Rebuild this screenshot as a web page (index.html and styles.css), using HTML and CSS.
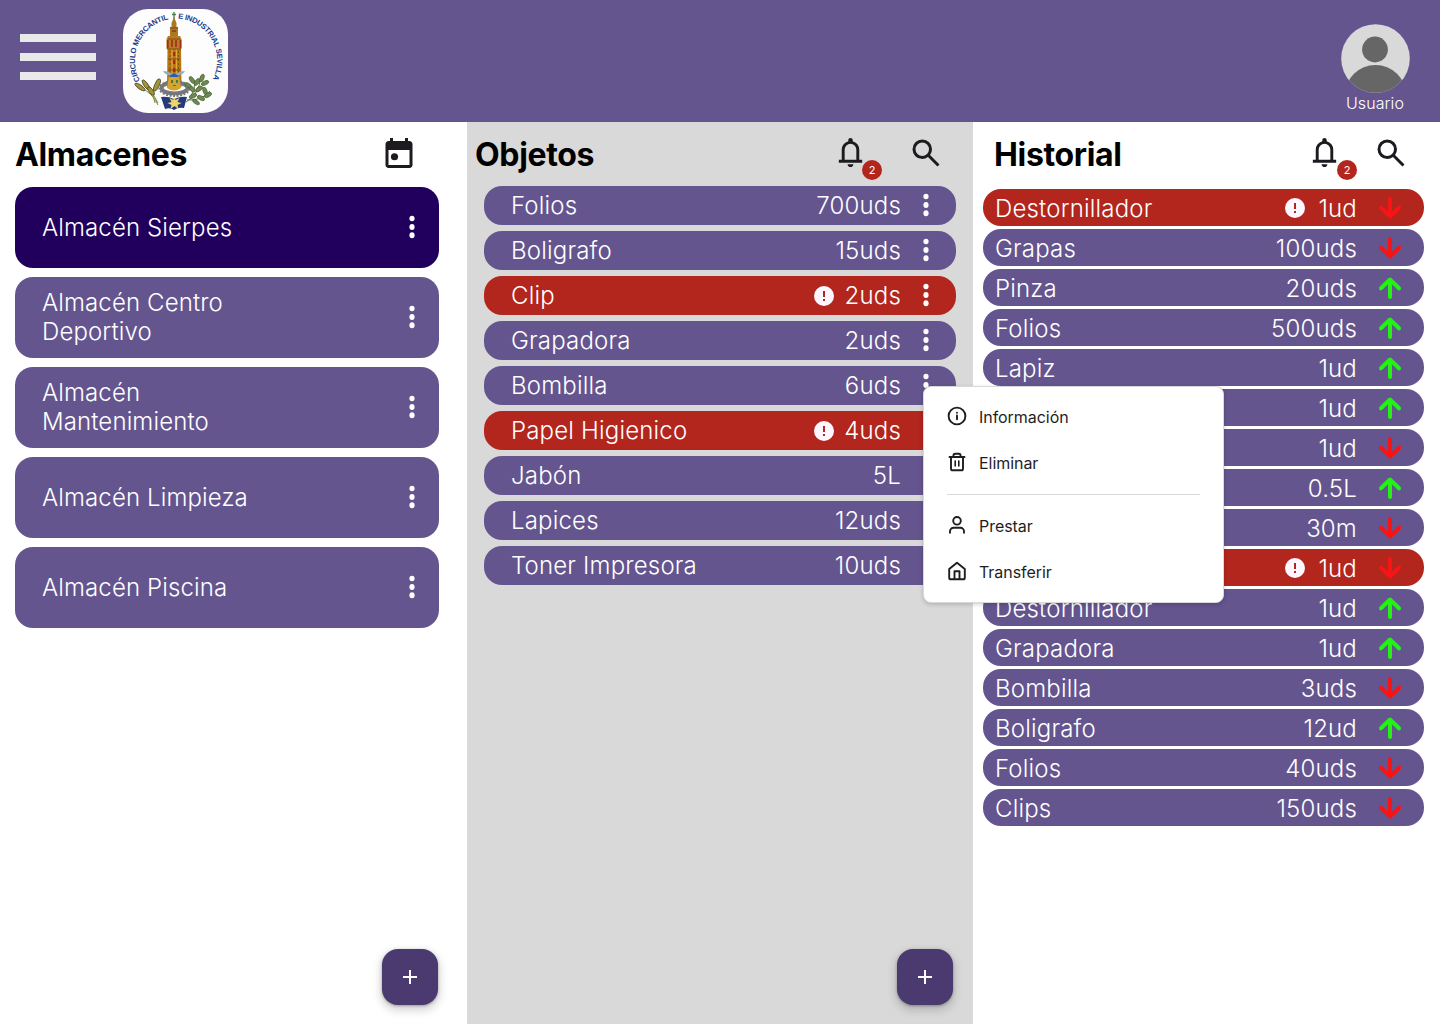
FILE: index.html
```html
<!DOCTYPE html>
<html lang="es">
<head>
<meta charset="utf-8">
<title>Almacenes</title>
<link rel="stylesheet" href="styles.css">
</head>
<body>
<svg class="defs" aria-hidden="true">
  <symbol id="bell" viewBox="0 -960 960 960"><path d="M160-200v-80h80v-280q0-83 50-147.500T420-792v-28q0-25 17.500-42.500T480-880q25 0 42.500 17.500T540-820v28q80 20 130 84.500T720-560v280h80v80H160Zm320 120q-33 0-56.500-23.500T400-160h160q0 33-23.500 56.500T480-80ZM320-280h320v-280q0-66-47-113t-113-47q-66 0-113 47t-47 113v280Z"/></symbol>
  <symbol id="search" viewBox="0 0 24 24"><path d="M19.600 21l-6.300-6.300A6.100 6.100 0 0 1 9.500 16 6.500 6.500 0 1 1 16 9.500a6.100 6.100 0 0 1-1.300 3.800l6.300 6.300zM9.500 14a4.500 4.500 0 1 0 0-9 4.500 4.500 0 0 0 0 9z"/></symbol>
  <symbol id="today" viewBox="0 0 24 24"><path fill-rule="evenodd" d="M5 22q-.82 0-1.410-.590T3 20V6q0-.820.590-1.410T5 4h1V2h2v2h8V2h2v2h1q.820 0 1.410.590T21 6v14q0 .820-.590 1.410T19 22zM5 20h14V10H5z"/><circle cx="9" cy="14.500" r="2.400"/></symbol>
  <symbol id="dots" viewBox="0 0 6 24"><ellipse cx="3" cy="3.500" rx="2.600" ry="2.800"/><ellipse cx="3" cy="12" rx="2.600" ry="3"/><ellipse cx="3" cy="20.300" rx="2.600" ry="3"/></symbol>
  <symbol id="alert" viewBox="0 0 20 20"><circle cx="10" cy="10" r="10" fill="#fef7ff"/><path d="M9 5h2v6H9zM9 13h2v2H9z" fill="#b3261e"/></symbol>
  <symbol id="down" viewBox="0 0 22 22"><path d="M11 2v17M2 10.700l9 8.800 9-8.800" fill="none" stroke="#f71414" stroke-width="4" stroke-linecap="round" stroke-linejoin="round"/></symbol>
  <symbol id="up" viewBox="0 0 22 22"><path d="M11 20V3M2 11.300l9-8.800 9 8.800" fill="none" stroke="#22f314" stroke-width="4" stroke-linecap="round" stroke-linejoin="round"/></symbol>
</svg>

<header class="topbar">
  <button class="menu-button" aria-label="Menú"><span></span><span></span><span></span></button>
  <svg class="logo" viewBox="0 0 105 104">
    <rect width="105" height="104" rx="25" fill="#fdfdfd"/>
    <path id="arcLeft" d="M17 71.500A42 42 0 0 1 46.500 10.200" fill="none"/>
    <path id="arcRight" d="M55 9.500A42 42 0 0 1 89 71.500" fill="none"/>
    <g font-family="Liberation Sans, sans-serif" font-weight="700" font-size="7.600" fill="#17398c">
      <text><textPath href="#arcLeft" textLength="78">CIRCULO MERCANTIL</textPath></text>
      <text><textPath href="#arcRight" textLength="82">E INDUSTRIAL SEVILLA</textPath></text>
    </g>
    <path d="M51 3v7M49 5.500h4" stroke="#3c8448" stroke-width="1.300"/>
    <path d="M51 8l2.500 6v4h1.500v10H47V18h1.500v-4z" fill="#a97a22"/>
    <path d="M45 27h12l1.500 3v10h-15V30z" fill="#b87d20"/>
    <path d="M44.500 40h13.500l.5 38h-14.500z" fill="#b97511"/>
    <path d="M49 40v31M53.300 40v31" stroke="#e8b83c" stroke-width="1"/>
    <path d="M44.800 31v8M57.500 31v8M49 31v7M53 31v7M49 22h4" stroke="#9f2f22" stroke-width="1.700"/>
    <path d="M44 40h14M45 30h12M47 19h8M45 50h12M45 61h12" stroke="#674318" stroke-width=".8"/>
    <path d="M51.200 43v22" stroke="#a12a19" stroke-width="2.200" stroke-dasharray="4 4"/>
    <path d="M47 42v24M55.500 42v24" stroke="#7e4f10" stroke-width="1" stroke-dasharray="2 2"/>
    <ellipse cx="51.500" cy="79" rx="13" ry="5.500" fill="none" stroke="#77777b" stroke-width="4"/>
    <ellipse cx="51.500" cy="79.500" rx="15" ry="7.500" fill="none" stroke="#77777c" stroke-width="2" stroke-dasharray="2 1.500"/>
    <path d="M46 67h10l2 12q-7 5-14 0z" fill="#d6a32c"/>
    <path d="M40 62q6 0 9 3h4q3-3 9-3-2 4-7 4h-8q-5 0-7-4z" fill="#9babb4"/>
    <path d="M46 68q5-7 10 0z" fill="#285eb0"/>
    <path d="M48 71h2v3h-2zM53 71h2v3h-2zM50 76h3v1h-3z" fill="#477b45"/>
    <path d="M38 88q7-1 13 2 7-3 13-2l-3 11q-6-1-10 2-4-3-9-1z" fill="#253a7d"/>
    <path d="M51 87l1.500 4 4-2-2 4 4 1-4 2 1 4-4-3-4 3 1-4-4-2 4-1-2-4 4 2z" fill="#efd56a"/>
    <path d="M14 76q17 9 21 20M20 72q10 11 15 22M35 72q-8 9-3 22" fill="none" stroke="#7e8642" stroke-width="1"/>
    <g fill="#a39538" stroke="#53522a" stroke-width=".9">
      <ellipse cx="17" cy="78" rx="2" ry="6" transform="rotate(-55 17 78)"/>
      <ellipse cx="23" cy="76" rx="2" ry="6" transform="rotate(-35 23 76)"/>
      <ellipse cx="34" cy="76" rx="2.200" ry="6.500" transform="rotate(25 34 76)"/>
      <ellipse cx="28" cy="82" rx="2" ry="5" transform="rotate(-35 28 82)"/>
    </g>
    <path d="M63 93q13-7 15-26M64 91q15 1 23-9M67 88q6-8 4-17" fill="none" stroke="#59723d" stroke-width="1"/>
    <g fill="#6f8a50" stroke="#405a2e" stroke-width=".6">
      <ellipse cx="69" cy="71" rx="2" ry="4" transform="rotate(-35 69 71)"/><ellipse cx="74" cy="73" rx="2" ry="4" transform="rotate(35 74 73)"/>
      <ellipse cx="79" cy="69" rx="2" ry="4" transform="rotate(20 79 69)"/><ellipse cx="82" cy="74" rx="2" ry="4" transform="rotate(65 82 74)"/>
      <ellipse cx="69" cy="80" rx="2" ry="4" transform="rotate(-45 69 80)"/><ellipse cx="76" cy="80" rx="2" ry="4" transform="rotate(55 76 80)"/>
      <ellipse cx="82" cy="82" rx="2" ry="4" transform="rotate(-20 82 82)"/><ellipse cx="85" cy="86" rx="2" ry="4" transform="rotate(60 85 86)"/>
      <ellipse cx="78" cy="89" rx="2" ry="4" transform="rotate(-60 78 89)"/><ellipse cx="70" cy="87" rx="2" ry="4" transform="rotate(65 70 87)"/>
      <ellipse cx="73" cy="93" rx="1.800" ry="4" transform="rotate(-55 73 93)"/><ellipse cx="65" cy="76" rx="1.800" ry="3.500" transform="rotate(-60 65 76)"/>
    </g>
  </svg>
  <div class="user">
    <svg class="avatar" viewBox="0 0 69 69">
      <clipPath id="face"><circle cx="34.500" cy="34.500" r="34.300"/></clipPath>
      <g clip-path="url(#face)"><rect width="69" height="69" fill="#d9d9d9"/><circle cx="34" cy="25.500" r="12.900" fill="#666"/><ellipse cx="34.500" cy="71" rx="30.500" ry="30" fill="#666"/></g>
    </svg>
    <span>Usuario</span>
  </div>
</header>

<main class="columns">
  <section class="column stores">
    <div class="heading"><h1>Almacenes</h1><svg class="icon today"><use href="#today"/></svg></div>
    <ul class="list">
      <li class="row selected"><span class="name">Almacén Sierpes</span><svg class="dots"><use href="#dots"/></svg></li>
      <li class="row"><span class="name">Almacén Centro Deportivo</span><svg class="dots"><use href="#dots"/></svg></li>
      <li class="row"><span class="name">Almacén Mantenimiento</span><svg class="dots"><use href="#dots"/></svg></li>
      <li class="row"><span class="name">Almacén Limpieza</span><svg class="dots"><use href="#dots"/></svg></li>
      <li class="row"><span class="name">Almacén Piscina</span><svg class="dots"><use href="#dots"/></svg></li>
    </ul>
    <button class="fab" aria-label="Añadir almacén"><svg viewBox="0 0 24 24"><path d="M11 5h2v6h6v2h-6v6h-2v-6H5v-2h6z"/></svg></button>
  </section>

  <section class="column objects">
    <div class="heading"><h1>Objetos</h1><div class="bell"><svg class="icon"><use href="#bell"/></svg><span class="badge">2</span></div><svg class="icon search"><use href="#search"/></svg></div>
    <ul class="list">
      <li class="row"><span class="name">Folios</span><span class="qty">700uds</span><svg class="dots"><use href="#dots"/></svg></li>
      <li class="row"><span class="name">Boligrafo</span><span class="qty">15uds</span><svg class="dots"><use href="#dots"/></svg></li>
      <li class="row low"><span class="name">Clip</span><svg class="alert"><use href="#alert"/></svg><span class="qty">2uds</span><svg class="dots"><use href="#dots"/></svg></li>
      <li class="row"><span class="name">Grapadora</span><span class="qty">2uds</span><svg class="dots"><use href="#dots"/></svg></li>
      <li class="row"><span class="name">Bombilla</span><span class="qty">6uds</span><svg class="dots"><use href="#dots"/></svg></li>
      <li class="row low"><span class="name">Papel Higienico</span><svg class="alert"><use href="#alert"/></svg><span class="qty">4uds</span><svg class="dots"><use href="#dots"/></svg></li>
      <li class="row"><span class="name">Jabón</span><span class="qty">5L</span><svg class="dots"><use href="#dots"/></svg></li>
      <li class="row"><span class="name">Lapices</span><span class="qty">12uds</span><svg class="dots"><use href="#dots"/></svg></li>
      <li class="row"><span class="name">Toner Impresora</span><span class="qty">10uds</span><svg class="dots"><use href="#dots"/></svg></li>
    </ul>
    <button class="fab" aria-label="Añadir objeto"><svg viewBox="0 0 24 24"><path d="M11 5h2v6h6v2h-6v6h-2v-6H5v-2h6z"/></svg></button>
  </section>

  <section class="column history">
    <div class="heading"><h1>Historial</h1><div class="bell"><svg class="icon"><use href="#bell"/></svg><span class="badge">2</span></div><svg class="icon search"><use href="#search"/></svg></div>
    <ul class="list">
      <li class="row low"><span class="name">Destornillador</span><svg class="alert"><use href="#alert"/></svg><span class="qty">1ud</span><svg class="arrow"><use href="#down"/></svg></li>
      <li class="row"><span class="name">Grapas</span><span class="qty">100uds</span><svg class="arrow"><use href="#down"/></svg></li>
      <li class="row"><span class="name">Pinza</span><span class="qty">20uds</span><svg class="arrow"><use href="#up"/></svg></li>
      <li class="row"><span class="name">Folios</span><span class="qty">500uds</span><svg class="arrow"><use href="#up"/></svg></li>
      <li class="row"><span class="name">Lapiz</span><span class="qty">1ud</span><svg class="arrow"><use href="#up"/></svg></li>
      <li class="row"><span class="name"></span><span class="qty">1ud</span><svg class="arrow"><use href="#up"/></svg></li>
      <li class="row"><span class="name"></span><span class="qty">1ud</span><svg class="arrow"><use href="#down"/></svg></li>
      <li class="row"><span class="name"></span><span class="qty">0.5L</span><svg class="arrow"><use href="#up"/></svg></li>
      <li class="row"><span class="name"></span><span class="qty">30m</span><svg class="arrow"><use href="#down"/></svg></li>
      <li class="row low"><span class="name"></span><svg class="alert"><use href="#alert"/></svg><span class="qty">1ud</span><svg class="arrow"><use href="#down"/></svg></li>
      <li class="row"><span class="name">Destornillador</span><span class="qty">1ud</span><svg class="arrow"><use href="#up"/></svg></li>
      <li class="row"><span class="name">Grapadora</span><span class="qty">1ud</span><svg class="arrow"><use href="#up"/></svg></li>
      <li class="row"><span class="name">Bombilla</span><span class="qty">3uds</span><svg class="arrow"><use href="#down"/></svg></li>
      <li class="row"><span class="name">Boligrafo</span><span class="qty">12ud</span><svg class="arrow"><use href="#up"/></svg></li>
      <li class="row"><span class="name">Folios</span><span class="qty">40uds</span><svg class="arrow"><use href="#down"/></svg></li>
      <li class="row"><span class="name">Clips</span><span class="qty">150uds</span><svg class="arrow"><use href="#down"/></svg></li>
    </ul>
  </section>
</main>

<div class="context-menu" role="menu">
  <div class="item"><svg viewBox="0 0 20 20"><circle cx="10" cy="10" r="8.400"/><path d="M10 13.300V9.500M10 6.700v.01"/></svg>Información</div>
  <div class="item"><svg viewBox="0 0 20 20"><path d="M2.500 5h15M6.500 5V3.300q0-1.600 1.600-1.600h3.800q1.600 0 1.600 1.600V5M4 5v11.700q0 1.600 1.600 1.600h8.800q1.600 0 1.600-1.600V5"/><path d="M8.200 9v5M11.800 9v5" stroke-width="1.600"/></svg>Eliminar</div>
  <hr>
  <div class="item"><svg viewBox="0 0 20 20"><circle cx="10" cy="5.800" r="3.800"/><path d="M3 17.800v-1.500a3.500 3.500 0 0 1 3.500-3.500h7a3.500 3.500 0 0 1 3.500 3.500v1.500"/></svg>Prestar</div>
  <div class="item"><svg viewBox="0 0 20 20"><path d="M2.200 8L10 1.700 17.800 8v8.700q0 1.600-1.600 1.600H3.800q-1.600 0-1.600-1.600z"/><path d="M7.500 18v-7.700h5V18"/></svg>Transferir</div>
</div>
</body>
</html>
```

FILE: styles.css
```css
* { box-sizing: border-box; }

body {
  margin: 0;
  width: 1440px;
  height: 1024px;
  overflow: hidden;
  position: relative;
  background: #fff;
  font-family: Inter, sans-serif;
}

button { border: 0; padding: 0; background: none; }
.defs { position: absolute; width: 0; height: 0; }

.topbar {
  display: flex;
  align-items: flex-start;
  height: 122px;
  padding-left: 20px;
  background: #65558f;
}
.menu-button {
  display: grid;
  gap: 11px;
  width: 76px;
  margin-top: 34px;
}
.menu-button span { height: 8px; background: #e9e9e9; }
.logo { width: 105px; height: 104px; margin: 9px 0 0 27px; }
.user {
  display: flex;
  flex-direction: column;
  align-items: center;
  width: 69px;
  margin: 24px 30.5px 0 auto;
  color: #fff;
  font-size: 16px;
  font-weight: 300;
  line-height: 20px;
}
.avatar { width: 69px; height: 69px; }
.user span { letter-spacing: 0.1px; }

.columns {
  display: grid;
  grid-template-columns: 467px 506px 467px;
  height: 902px;
}
.column { position: relative; }
.objects { background: #d9d9d9; }

.heading { display: flex; align-items: flex-start; }
h1 {
  flex: 1;
  margin: 13px 0 0;
  color: #000;
  font-size: 32px;
  font-weight: 700;
  line-height: 39px;
  letter-spacing: -0.35px;
}
.icon { display: block; flex: none; width: 36px; height: 36px; fill: #1d1b20; }
.bell { position: relative; margin: 13px 39.5px 0 0; }
.bell .icon { width: 35px; height: 35px; }
.badge {
  position: absolute;
  left: 29px;
  top: 25px;
  width: 20px;
  height: 20px;
  border-radius: 50%;
  background: #b3261e;
  color: #fff;
  font-size: 11px;
  line-height: 20px;
  text-align: center;
}
.search { margin-top: 12.5px; }

.list { display: grid; margin: 0; padding: 0; list-style: none; }
.row {
  display: flex;
  align-items: center;
  border-radius: 18px;
  background: #65558f;
  color: #fff;
  font-size: 24px;
  font-weight: 300;
  line-height: 29px;
  letter-spacing: 0.18px;
}
.name { flex: 1; }
.selected { background: #21005d; }
.low { background: #b3261e; }
.dots { flex: none; width: 6px; height: 24px; margin-top: -1px; fill: #fff; }
.alert { width: 20px; height: 20px; margin-right: 10.5px; }

.stores .heading { height: 65px; padding: 0 50px 0 15px; }
.today { margin-top: 12.5px; }
.stores .list { gap: 9px; margin: 0 28px 0 15px; }
.stores .row { height: 81px; padding: 0 24px 1px 27px; letter-spacing: 0.12px; }
.stores .name { flex: none; width: 230px; margin-right: auto; }

.objects .heading { height: 64px; padding: 0 29.5px 0 8px; }
.objects .list { gap: 6px; margin: 0 17px; }
.objects .row { height: 39px; padding: 0 27.5px 0 27px; }
.objects .dots { margin-left: 21.5px; }

.history .heading { height: 67px; padding: 0 31px 0 21px; }
.history .bell { margin-right: 31px; }
.history .badge { left: 30px; }
.history .list { gap: 3px; margin: 0 16px 0 10px; }
.history .row { height: 37px; padding: 1px 23px 0 12px; }
.history .alert { margin-right: 13px; }
.arrow { width: 22px; height: 22px; margin-left: 22px; }

.fab {
  position: absolute;
  right: 29px;
  bottom: 19px;
  display: grid;
  place-items: center;
  width: 56px;
  height: 56px;
  border-radius: 16px;
  background: #4a3a70;
  box-shadow: 0 4px 8px 2px rgb(0 0 0 / 15%), 0 1px 3px rgb(0 0 0 / 30%);
}
.objects .fab { right: 20px; }
.fab svg { width: 24px; height: 24px; fill: #fff; }

.context-menu {
  position: absolute;
  left: 923px;
  top: 386px;
  width: 301px;
  height: 217px;
  padding: 7px 23px;
  border: 1px solid #d9d9d9;
  border-radius: 8px;
  background: #fff;
  box-shadow: 0 1px 4px rgb(12 12 13 / 12%), 0 2px 4px rgb(12 12 13 / 8%);
}
.item {
  display: flex;
  align-items: center;
  gap: 12px;
  height: 46px;
  color: #1e1e1e;
  font-size: 16px;
  letter-spacing: -0.05px;
}
.item svg {
  width: 20px;
  height: 20px;
  margin-top: -2px;
  fill: none;
  stroke: #1e1e1e;
  stroke-width: 1.9;
  stroke-linecap: round;
  stroke-linejoin: round;
}
hr { height: 1px; margin: 8px 0; border: 0; background: #d9d9d9; }
```
